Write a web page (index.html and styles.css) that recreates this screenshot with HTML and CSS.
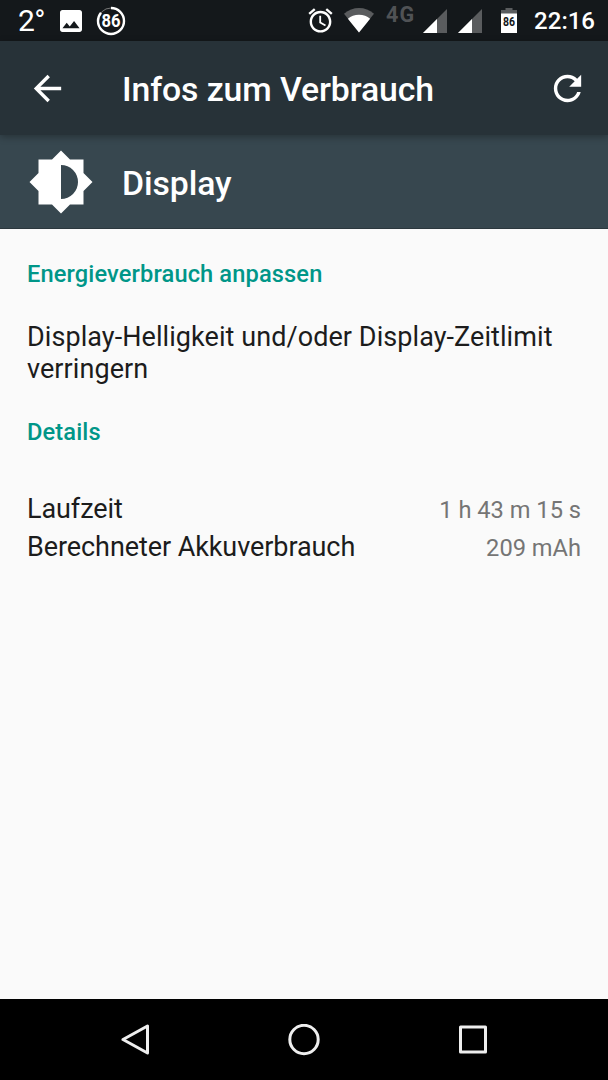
FILE: index.html
```
<!DOCTYPE html>
<html lang="de">
<head>
    <meta charset="UTF-8">
    <meta name="viewport" content="width=device-width, initial-scale=1.0">
    <title>Infos zum Verbrauch</title>
    <link rel="stylesheet" href="styles.css">
</head>
<body>
    <div class="screen">
        <div class="status-bar">
            <span class="temperature">2°</span>
            <svg class="icon-image" viewBox="3 3 18 18"><path d="M21 19V5c0-1.100-.9-2-2-2H5c-1.100 0-2 .9-2 2v14c0 1.100.9 2 2 2h14c1.100 0 2-.9 2-2zM8.500 13.500l2.500 3.010L14.500 12l4.500 6H5l3.500-4.500z"/></svg>
            <svg class="icon-level" viewBox="0 0 30 30">
                <circle class="ring-track" cx="15" cy="15" r="13"/>
                <circle class="ring" cx="15" cy="15" r="13" pathLength="100" stroke-dasharray="86 14" transform="rotate(-90 15 15)"/>
                <text x="15" y="21.300" textLength="19" lengthAdjust="spacingAndGlyphs">86</text>
            </svg>

            <svg class="icon-alarm" viewBox="0 0 24 24"><path d="M22 5.720l-4.600-3.860-1.290 1.530 4.600 3.860L22 5.720zM7.880 3.390L6.600 1.860 2 5.710l1.290 1.530 4.590-3.850zM12.500 8H11v6l4.750 2.850.75-1.230-4-2.370V8zM12 4c-4.970 0-9 4.030-9 9s4.020 9 9 9c4.970 0 9-4.030 9-9s-4.030-9-9-9zm0 16c-3.870 0-7-3.130-7-7s3.130-7 7-7 7 3.130 7 7-3.130 7-7 7z"/></svg>
            <svg class="icon-wifi" viewBox="0 0 30 25">
                <path class="dim" d="M15 24.500L0 5.700C4.500 2 9.500 0 15 0s10.500 2 15 5.700z"/>
                <path d="M15 24.500L3.900 10.700C7 8.200 10.500 6.700 15 6.700s8 1.500 11.100 4z"/>
            </svg>
            <span class="network">4G</span>
            <svg class="icon-signal" viewBox="0 0 24 24"><path class="dim" d="M0 24L24 0v24z"/><path d="M0 24L14 10v14z"/></svg>
            <svg class="icon-signal second" viewBox="0 0 24 24"><path class="dim" d="M0 24L24 0v24z"/><path d="M0 24L14 10v14z"/></svg>
            <svg class="icon-battery" viewBox="0 0 16 25">
                <path class="dim" d="M4.500 0h7v2H16v4H0V2h4.500z"/>
                <path d="M0 5.500h16V25H0z"/>
                <text x="8" y="17.500" textLength="12" lengthAdjust="spacingAndGlyphs">86</text>
            </svg>
            <span class="clock">22:16</span>
        </div>

        <div class="toolbar">
            <svg class="icon" viewBox="0 0 24 24"><path d="M20 11H7.830l5.590-5.590L12 4l-8 8 8 8 1.410-1.410L7.830 13H20v-2z"/></svg>
            <h1>Infos zum Verbrauch</h1>
            <svg class="icon" viewBox="0 0 24 24"><path d="M17.650 6.350C16.200 4.900 14.210 4 12 4c-4.420 0-7.990 3.580-7.990 8s3.570 8 7.990 8c3.730 0 6.840-2.550 7.730-6h-2.080c-.82 2.330-3.040 4-5.650 4-3.310 0-6-2.690-6-6s2.690-6 6-6c1.660 0 3.140.69 4.220 1.780L13 11h7V4l-2.350 2.350z"/></svg>
        </div>

        <div class="app-header">
            <svg class="icon-display" viewBox="0 0 64 64">
                <path fill-rule="evenodd" d="M32 .500L41 9.500H54.500V23L63.500 32l-9 9V54.500H41l-9 9-9-9H9.500V41l-9-9 9-9V9.500H23zM32 15v34a17 17 0 0 0 0-34z"/>
            </svg>
            <h2>Display</h2>
        </div>

        <div class="content">
            <h3>Energieverbrauch anpassen</h3>
            <p>Display-Helligkeit und/oder Display-Zeitlimit verringern</p>
            <h3>Details</h3>
            <div class="details">
                <div class="row">
                    <span>Laufzeit</span>
                    <span class="value">1 h 43 m 15 s</span>
                </div>
                <div class="row">
                    <span>Berechneter Akkuverbrauch</span>
                    <span class="value">209 mAh</span>
                </div>
            </div>
        </div>

        <div class="nav-bar">
            <svg viewBox="0 0 32 32"><path d="M28.500 2v27L4 15.500z"/></svg>
            <svg viewBox="0 0 32 32"><circle cx="16" cy="15.500" r="14.200"/></svg>
            <svg viewBox="0 0 32 32"><rect x="3.500" y="3" width="25" height="25"/></svg>
        </div>
    </div>
</body>
</html>
```
FILE: styles.css
```
* {
    box-sizing: border-box;
}

body {
    margin: 0;
    font-family: Roboto, sans-serif;
    background: #fafafa;
    color: #1c1c1c;
}

h1, h2, h3, p {
    margin: 0;
    font-weight: 500;
}

svg {
    display: block;
    flex: none;
    fill: #fff;
}

.screen {
    display: flex;
    flex-direction: column;
    width: 608px;
    height: 1080px;
    overflow: hidden;
}

/* Status bar */
.status-bar {
    display: flex;
    align-items: center;
    flex: none;
    height: 41px;
    padding: 0 13px 0 18px;
    background: #14181b;
    color: #fff;
    white-space: nowrap;
}

.status-bar .dim {
    fill: #5a5c5e;
}

.temperature {
    width: 42px;
    font-size: 30px;
    line-height: 41px;
    letter-spacing: -0.5px;
}

.icon-image {
    width: 22px;
    height: 22px;
}

.icon-level {
    width: 30px;
    height: 30px;
    margin-left: 14px;
    margin-right: auto;
}

.icon-level circle {
    fill: none;
    stroke: #fff;
    stroke-width: 2.4;
}

.icon-level .ring-track {
    stroke: #777;
    stroke-width: 1;
}

.icon-level text {
    font-size: 17.5px;
    font-weight: 700;
    text-anchor: middle;
}

.icon-alarm {
    width: 29px;
    height: 29px;
    margin-right: 9px;
}

.icon-wifi {
    width: 30px;
    height: 25px;
}

.network {
    width: 37px;
    margin: 0 0 12px 12px;
    font-size: 21.5px;
    font-weight: 700;
    line-height: 24px;
    letter-spacing: 1px;
    color: #505255;
}

.icon-signal {
    width: 24px;
    height: 24px;
    margin-top: 1px;
}

.icon-signal.second {
    margin-left: 11px;
}

.icon-battery {
    width: 16px;
    height: 25px;
    margin: 0 17px 0 19px;
}

.icon-battery text {
    font-size: 13.5px;
    font-weight: 700;
    text-anchor: middle;
    fill: #14181b;
}

.clock {
    padding-top: 2px;
    font-size: 24px;
    font-weight: 500;
    line-height: 41px;
}

/* Toolbar */
.toolbar {
    display: flex;
    align-items: center;
    flex: none;
    height: 94px;
    padding: 0 20px 0 27px;
    background: #273238;
    color: #fff;
    box-shadow: 0 2px 7px rgba(0, 0, 0, 0.3);
    z-index: 1;
}

.toolbar h1 {
    flex: 1;
    margin-left: 54px;
    padding-top: 3px;
    font-size: 33.8px;
    line-height: 40px;
    letter-spacing: -0.1px;
}

.icon {
    width: 41px;
    height: 41px;
}

.app-header {
    display: flex;
    align-items: center;
    flex: none;
    height: 94px;
    padding-left: 29px;
    background: #37474f;
    border-bottom: 1px solid #2c383e;
    color: #fff;
}

.icon-display {
    width: 64px;
    height: 64px;
}

.app-header h2 {
    margin-left: 29px;
    padding-top: 4px;
    font-size: 33.8px;
    line-height: 40px;
    letter-spacing: -0.1px;
}

/* Content */
.content {
    flex: 1;
    padding: 31px 27px 0;
    font-size: 27px;
    line-height: 32px;
}

.content h3 {
    font-size: 23.65px;
    line-height: 28px;
    letter-spacing: 0.12px;
    color: #009688;
}

.content p {
    margin: 33px 0;
    font-weight: 400;
    letter-spacing: 0.07px;
}

.details {
    margin-top: 47px;
    letter-spacing: -0.08px;
}

.row {
    display: flex;
    justify-content: space-between;
    align-items: baseline;
    height: 38px;
}

.value {
    font-size: 23.65px;
    letter-spacing: 0;
    color: #757575;
}

/* Navigation bar */
.nav-bar {
    display: flex;
    align-items: center;
    justify-content: center;
    gap: 137px;
    flex: none;
    height: 81px;
    background: #000;
}

.nav-bar svg {
    width: 32px;
    height: 32px;
    fill: none;
    stroke: #eee;
    stroke-width: 3;
    stroke-linejoin: round;
}
```
